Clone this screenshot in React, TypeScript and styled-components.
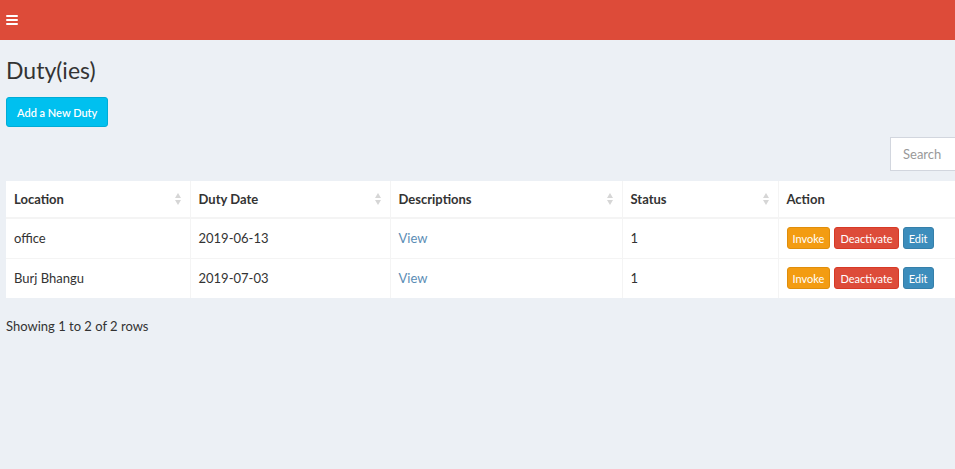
import React from "react";
import styled, { createGlobalStyle } from "styled-components";

const GlobalStyle = createGlobalStyle`
  html, body {
    margin: 0;
    padding: 0;
    background: #ecf0f5;
    overflow: hidden;
  }
  body {
    font-family: "Lato", "Liberation Sans", sans-serif;
    color: #333;
    font-size: 13px;
  }
`;

const Topbar = styled.header`
  height: 40px;
  background: #dd4b39;
  display: flex;
  align-items: center;
  padding-left: 6px;
`;

const Burger = styled.span`
  display: flex;
  flex-direction: column;
  gap: 2px;
  width: 12px;
  span {
    height: 2px;
    background: #fff;
    border-radius: 1px;
  }
`;

const Content = styled.main`
  width: 994px;
  padding: 0 6px;
`;

const Title = styled.h1`
  margin: 16px 0 13px;
  font-size: 23px;
  font-weight: 400;
  line-height: 28px;
  color: #333;
`;

const PrimaryButton = styled.button`
  font-family: inherit;
  font-size: 11px;
  font-weight: 600;
  color: #fff;
  background: #00c0ef;
  border: 1px solid #00acd6;
  border-radius: 3px;
  height: 30px;
  padding: 0 10px;
`;

const Toolbar = styled.div`
  display: flex;
  justify-content: flex-end;
  margin: 10px 0;
`;

const Search = styled.input`
  width: 110px;
  height: 34px;
  box-sizing: border-box;
  border: 1px solid #d2d6de;
  padding: 0 12px;
  font-family: inherit;
  font-size: 13px;
  color: #555;
  &::placeholder {
    color: #999;
  }
`;

const Table = styled.table`
  width: 100%;
  border-collapse: collapse;
  background: #fff;
`;

const Th = styled.th<{ $w?: number }>`
  width: ${(p) => (p.$w ? `${p.$w}px` : "auto")};
  height: 37px;
  box-sizing: border-box;
  padding: 0 8px;
  text-align: left;
  font-weight: 700;
  font-size: 13px;
  color: #333;
  border-left: 1px solid #f4f4f4;
  border-bottom: 2px solid #f4f4f4;
  &:first-child {
    border-left: none;
  }
`;

const HeadInner = styled.div`
  display: flex;
  align-items: center;
  justify-content: space-between;
`;

const Td = styled.td`
  height: 40px;
  box-sizing: border-box;
  padding: 0 8px;
  font-size: 13px;
  color: #333;
  border-left: 1px solid #f4f4f4;
  border-top: 1px solid #f4f4f4;
  &:first-child {
    border-left: none;
  }
`;

const Link = styled.a`
  color: #5b8db5;
  text-decoration: none;
`;

const Actions = styled.div`
  display: flex;
  gap: 4px;
`;

const SmallButton = styled.button<{ $bg: string; $border: string }>`
  font-family: inherit;
  font-size: 11px;
  color: #fff;
  background: ${(p) => p.$bg};
  border: 1px solid ${(p) => p.$border};
  border-radius: 3px;
  height: 22px;
  padding: 0 5px;
`;

const Footer = styled.div`
  margin-top: 20px;
  font-size: 13px;
  color: #333;
`;

const SortIcon = () => (
  <svg width="8" height="14" viewBox="0 0 8 14">
    <path d="M4 1 L7 6 H1 Z" fill="#d6d6d6" />
    <path d="M4 13 L7 8 H1 Z" fill="#d6d6d6" />
  </svg>
);

const rows = [
  { location: "office", date: "2019-06-13", status: "1" },
  { location: "Burj Bhangu", date: "2019-07-03", status: "1" },
];

const columns: { label: string; w?: number; sort: boolean }[] = [
  { label: "Location", w: 184, sort: true },
  { label: "Duty Date", w: 200, sort: true },
  { label: "Descriptions", w: 232, sort: true },
  { label: "Status", w: 156, sort: true },
  { label: "Action", sort: false },
];

export default function App() {
  return (
    <>
      <GlobalStyle />
      <Topbar>
        <Burger>
          <span />
          <span />
          <span />
        </Burger>
      </Topbar>
      <Content>
        <Title>Duty(ies)</Title>
        <PrimaryButton>Add a New Duty</PrimaryButton>
        <Toolbar>
          <Search placeholder="Search" />
        </Toolbar>
        <Table>
          <thead>
            <tr>
              {columns.map((c) => (
                <Th key={c.label} $w={c.w}>
                  <HeadInner>
                    {c.label}
                    {c.sort && <SortIcon />}
                  </HeadInner>
                </Th>
              ))}
            </tr>
          </thead>
          <tbody>
            {rows.map((r) => (
              <tr key={r.location}>
                <Td>{r.location}</Td>
                <Td>{r.date}</Td>
                <Td>
                  <Link href="#">View</Link>
                </Td>
                <Td>{r.status}</Td>
                <Td>
                  <Actions>
                    <SmallButton $bg="#f39c12" $border="#e08e0b">Invoke</SmallButton>
                    <SmallButton $bg="#dd4b39" $border="#d73925">Deactivate</SmallButton>
                    <SmallButton $bg="#3c8dbc" $border="#367fa9">Edit</SmallButton>
                  </Actions>
                </Td>
              </tr>
            ))}
          </tbody>
        </Table>
        <Footer>Showing 1 to 2 of 2 rows</Footer>
      </Content>
    </>
  );
}
